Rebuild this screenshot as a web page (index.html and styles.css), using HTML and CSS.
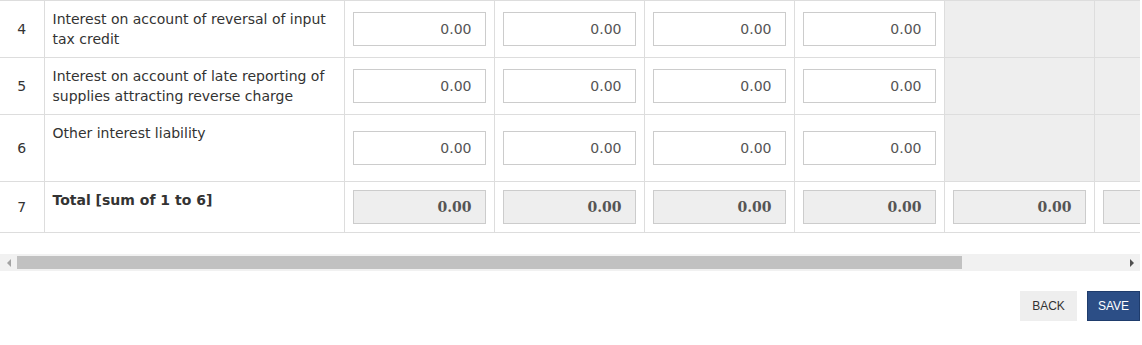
FILE: index.html
```html
<!DOCTYPE html>
<html lang="en">

<head>
    <meta charset="UTF-8" />
    <meta name="viewport" content="width=device-width, initial-scale=1.0" />
    <title>Interest liability</title>
    <link rel="stylesheet" href="styles.css">
</head>

<body>
    <div class="main">
        <div class="table-scroll">
            <table class="grid">
                <colgroup>
                    <col class="col-no">
                    <col class="col-desc">
                    <col class="col-amt">
                    <col class="col-amt">
                    <col class="col-amt">
                    <col class="col-amt">
                    <col class="col-amt">
                    <col class="col-last">
                </colgroup>
                <tr class="row-two">
                    <td class="cell-no">4</td>
                    <td class="cell-desc">Interest on account of reversal of input tax credit</td>
                    <td class="cell-amt"><input class="amt" type="text" value="0.00"></td>
                    <td class="cell-amt"><input class="amt" type="text" value="0.00"></td>
                    <td class="cell-amt"><input class="amt" type="text" value="0.00"></td>
                    <td class="cell-amt"><input class="amt" type="text" value="0.00"></td>
                    <td class="cell-off"></td>
                    <td class="cell-off"></td>
                </tr>
                <tr class="row-two">
                    <td class="cell-no">5</td>
                    <td class="cell-desc">Interest on account of late reporting of supplies attracting reverse charge</td>
                    <td class="cell-amt"><input class="amt" type="text" value="0.00"></td>
                    <td class="cell-amt"><input class="amt" type="text" value="0.00"></td>
                    <td class="cell-amt"><input class="amt" type="text" value="0.00"></td>
                    <td class="cell-amt"><input class="amt" type="text" value="0.00"></td>
                    <td class="cell-off"></td>
                    <td class="cell-off"></td>
                </tr>
                <tr class="row-other">
                    <td class="cell-no">6</td>
                    <td class="cell-desc">Other interest liability</td>
                    <td class="cell-amt"><input class="amt" type="text" value="0.00"></td>
                    <td class="cell-amt"><input class="amt" type="text" value="0.00"></td>
                    <td class="cell-amt"><input class="amt" type="text" value="0.00"></td>
                    <td class="cell-amt"><input class="amt" type="text" value="0.00"></td>
                    <td class="cell-off"></td>
                    <td class="cell-off"></td>
                </tr>
                <tr class="row-total">
                    <td class="cell-no">7</td>
                    <td class="cell-desc total-label">Total [sum of 1 to 6]</td>
                    <td class="cell-amt"><input class="amt amt-total" type="text" value="0.00" readonly></td>
                    <td class="cell-amt"><input class="amt amt-total" type="text" value="0.00" readonly></td>
                    <td class="cell-amt"><input class="amt amt-total" type="text" value="0.00" readonly></td>
                    <td class="cell-amt"><input class="amt amt-total" type="text" value="0.00" readonly></td>
                    <td class="cell-amt"><input class="amt amt-total" type="text" value="0.00" readonly></td>
                    <td class="cell-amt"><input class="amt amt-total amt-wide" type="text" value="0.00" readonly></td>
                </tr>
            </table>
        </div>

        <!-- horizontal scrollbar of the table area -->
        <div class="hscroll">
            <div class="hscroll-btn"><span class="arrow-left"></span></div>
            <div class="hscroll-track">
                <div class="hscroll-thumb"></div>
            </div>
            <div class="hscroll-btn"><span class="arrow-right"></span></div>
        </div>

        <div class="actions">
            <button class="btn btn-back" type="button">BACK</button>
            <button class="btn btn-save" type="button">SAVE</button>
        </div>
    </div>
</body>

</html>
```

FILE: styles.css
```css
body {
    margin: 0;
    font-family: "DejaVu Sans", Verdana, sans-serif;
    font-size: 14px;
    color: #333;
    background-color: #fff;
}

.main {
    width: 1140px;
}

.table-scroll {
    width: 1140px;
    overflow: hidden;
    padding-bottom: 21px;
}

.grid {
    border-collapse: collapse;
    table-layout: fixed;
    width: 1334px;
}

.col-no {
    width: 44px;
}

.col-desc {
    width: 300px;
}

.col-amt {
    width: 150px;
}

.col-last {
    width: 240px;
}

.grid td {
    border: 1px solid #ddd;
    padding: 0 8px;
    line-height: 20px;
}

.grid tr td:first-child {
    border-left: none;
}

.cell-no {
    text-align: center;
    vertical-align: middle;
    padding: 0 !important;
}

.cell-desc {
    vertical-align: top;
    padding-top: 8px !important;
}

.cell-amt {
    vertical-align: middle;
}

.cell-off {
    background-color: #eee;
}

.row-two {
    height: 57px;
}

.row-other {
    height: 67px;
}

.row-total {
    height: 51px;
}

.total-label {
    font-weight: bold;
}

.amt {
    display: block;
    box-sizing: border-box;
    width: 133px;
    height: 34px;
    margin: 0;
    padding: 0 13px 0 6px;
    border: 1px solid #ccc;
    background-color: #fff;
    font-family: "DejaVu Sans", Verdana, sans-serif;
    font-size: 14px;
    color: #555;
    text-align: right;
    outline: none;
}

.amt-total {
    background-color: #eee;
    font-family: "DejaVu Serif", Georgia, serif;
    font-weight: bold;
    font-size: 14px;
    color: #555;
}

.amt-wide {
    width: 224px;
}

.hscroll {
    display: flex;
    width: 1140px;
    height: 17px;
    background-color: #f1f1f1;
}

.hscroll-btn {
    width: 17px;
    display: flex;
    align-items: center;
    justify-content: center;
}

.hscroll-track {
    flex: 1;
    display: flex;
    align-items: center;
}

.hscroll-thumb {
    width: 945px;
    height: 13px;
    background-color: #c1c1c1;
}

.arrow-left {
    width: 0;
    height: 0;
    border-top: 4px solid transparent;
    border-bottom: 4px solid transparent;
    border-right: 4px solid #a3a3a3;
}

.arrow-right {
    width: 0;
    height: 0;
    border-top: 4px solid transparent;
    border-bottom: 4px solid transparent;
    border-left: 4px solid #505050;
}

.actions {
    display: flex;
    justify-content: flex-end;
    gap: 10px;
    margin-top: 20px;
}

.btn {
    height: 30px;
    padding: 0 11px;
    border: 1px solid transparent;
    font-family: "Liberation Sans", Arial, sans-serif;
    font-size: 12px;
    cursor: pointer;
}

.btn-back {
    background-color: #eee;
    border-color: #eee;
    color: #333;
}

.btn-save {
    background-color: #2c4e86;
    border-color: #1f3c6c;
    color: #fff;
    padding: 0 10px;
}
```
